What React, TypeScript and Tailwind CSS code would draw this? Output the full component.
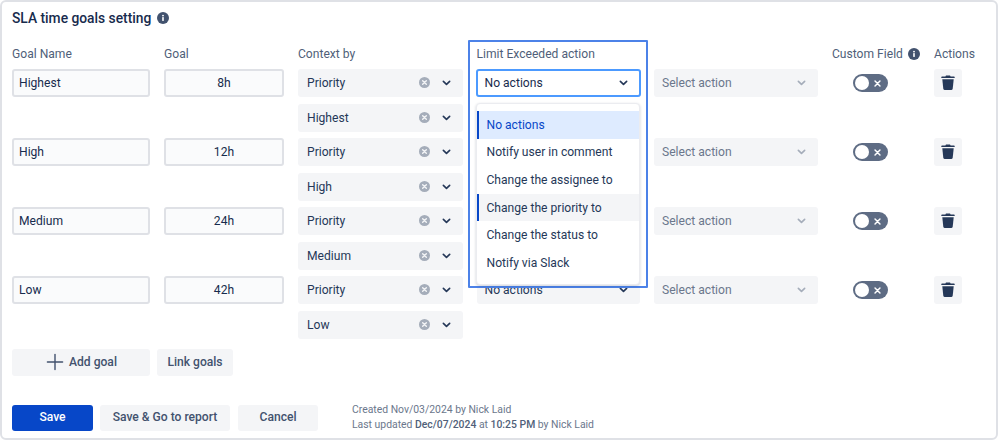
import React from 'react';
import { Plus } from 'lucide-react';

const columns = 'grid grid-cols-[138px_120px_164.5px_163.5px_164px_88px_40px] gap-x-[14px]';

const goals = [
    { name: 'Highest', goal: '8h' },
    { name: 'High', goal: '12h' },
    { name: 'Medium', goal: '24h' },
    { name: 'Low', goal: '42h' }
];

const options = ['No actions', 'Notify user in comment', 'Change the assignee to', 'Change the priority to', 'Change the status to', 'Notify via Slack'];

function InfoIcon() {
    return (
        <svg viewBox="0 0 12 12" className="w-3 h-3 shrink-0">
            <circle cx="6" cy="6" r="6" fill="#42526e" />
            <rect x="5.2" y="5.1" width="1.6" height="3.9" rx="0.4" fill="#fff" />
            <circle cx="6" cy="3.6" r="0.95" fill="#fff" />
        </svg>
    );
}

function Chevron({ color = '#253858' }: { color?: string }) {
    return (
        <svg viewBox="0 0 10 6" className="w-[9px] h-[6px]" fill="none" stroke={color} strokeWidth="1.8" strokeLinecap="round" strokeLinejoin="round">
            <path d="M1.5 1.2 5 4.6l3.5-3.4" />
        </svg>
    );
}

function ClearIcon() {
    return (
        <svg viewBox="0 0 12 12" className="w-[11px] h-[11px]">
            <circle cx="6" cy="6" r="6" fill="#a5adba" />
            <path d="M4 4l4 4M8 4l-4 4" stroke="#f4f5f7" strokeWidth="1.5" strokeLinecap="round" />
        </svg>
    );
}

function TrashIcon() {
    return (
        <svg viewBox="0 0 14 15" className="w-[14px] h-[15px]" fill="#253858">
            <path d="M5 0.4h4l.6 1.1h3.4c.4 0 .7.3.7.7v.8H.3v-.8c0-.4.3-.7.7-.7h3.4z" />
            <path d="M1.3 4.2h11.4l-1 9.6c-.1.7-.6 1.1-1.2 1.1H3.5c-.6 0-1.1-.4-1.2-1.1z" />
        </svg>
    );
}

function Toggle() {
    return (
        <div className="ml-[21px] mt-[5px] w-[35px] h-[18px] rounded-full bg-[#5e6c84] flex items-center justify-between pl-[2px] pr-[7px]">
            <span className="w-[14px] h-[14px] rounded-full bg-white" />
            <svg viewBox="0 0 8 8" className="w-[7px] h-[7px]" stroke="#fff" strokeWidth="1.7" strokeLinecap="round">
                <path d="M1.2 1.2l5.6 5.6M6.8 1.2 1.2 6.8" />
            </svg>
        </div>
    );
}

function ContextSelect({ label }: { label: string }) {
    return (
        <div className="h-[27.5px] rounded-[3px] bg-[#f4f5f7] flex items-center pl-[9px] pr-[12px] text-[#253858]">
            <span className="flex-1">{label}</span>
            <ClearIcon />
            <span className="ml-[12px] flex"><Chevron /></span>
        </div>
    );
}

function ActionSelect({ label, muted }: { label: string; muted?: boolean }) {
    return (
        <div className={`h-[27.5px] rounded-[3px] bg-[#f4f5f7] flex items-center justify-between pl-[8px] pr-[12px] ${muted ? 'text-[#6b778c]' : 'text-[#253858]'}`}>
            <span>{label}</span>
            <Chevron color={muted ? '#a5adba' : '#253858'} />
        </div>
    );
}

function GoalRow({ name, goal, covered }: { name: string; goal: string; covered: boolean }) {
    return (
        <div className={columns}>
            <div className="h-[27.5px] rounded-[3px] border-2 border-[#dfe1e6] bg-[#fafbfc] flex items-center pl-[5px] text-[#172b4d]">{name}</div>
            <div className="h-[27.5px] rounded-[3px] border-2 border-[#dfe1e6] bg-[#fafbfc] flex items-center justify-center text-[#172b4d]">{goal}</div>
            <div className="flex flex-col gap-[7.5px]">
                <ContextSelect label="Priority" />
                <ContextSelect label={name} />
            </div>
            {/* the open menu hides this cell in the upper rows */}
            {covered ? <span /> : <ActionSelect label="No actions" />}
            <ActionSelect label="Select action" muted />
            <Toggle />
            <div className="w-[28px] h-[27.5px] rounded-[3px] bg-[#f4f5f7] flex items-center justify-center">
                <TrashIcon />
            </div>
        </div>
    );
}

export default function App() {
    return (
        <div className="w-[999px] h-[441px] bg-white text-[12.1px] font-['Roboto',sans-serif]">
            <div className="relative h-[440px] w-[998px] rounded-md border-2 border-[#dfe1e6] pl-[10px] pt-[8px]">
                <div className="flex items-center gap-[6px] h-[16px]">
                    <h1 className="text-[13.8px] font-medium text-[#172b4d]">SLA time goals setting</h1>
                    <InfoIcon />
                </div>

                <div className={`${columns} mt-[19px] h-[16px] items-center whitespace-nowrap text-[#505f79]`}>
                    <span>Goal Name</span>
                    <span>Goal</span>
                    <span>Context by</span>
                    <span />
                    <span />
                    <span className="flex items-center gap-[5px]">Custom Field <InfoIcon /></span>
                    <span>Actions</span>
                </div>

                <div className="mt-[8px] flex flex-col gap-[6.5px]">
                    {goals.map((g, i) => <GoalRow key={g.name} name={g.name} goal={g.goal} covered={i < 3} />)}
                </div>

                <div className="mt-[10px] flex gap-[7px] font-medium text-[#42526e]">
                    <button className="w-[138px] h-[27.5px] rounded-[3px] bg-[#f4f5f7] flex items-center justify-center gap-[1px] pr-[3px]">
                        <Plus size={26} strokeWidth={1.3} /> Add goal
                    </button>
                    <button className="w-[76px] h-[27.5px] rounded-[3px] bg-[#f4f5f7]">Link goals</button>
                </div>

                <div className="mt-[25.5px] flex items-center font-medium">
                    <button className="w-[81px] h-[26px] rounded-[3px] bg-[#0747c8] text-white">Save</button>
                    <button className="ml-[7px] w-[130px] h-[26px] rounded-[3px] bg-[#f4f5f7] text-[#42526e]">Save &amp; Go to report</button>
                    <button className="ml-[8px] w-[80px] h-[26px] rounded-[3px] bg-[#f4f5f7] text-[#42526e]">Cancel</button>
                    <div className="ml-[34px] mb-[2px] text-[10.4px] leading-[15px] font-normal text-[#6b778c]">
                        <div>Created Nov/03/2024 by Nick Laid</div>
                        <div>Last updated <b className="font-medium text-[#505f79]">Dec/07/2024</b> at <b className="font-medium text-[#505f79]">10:25 PM</b> by Nick Laid</div>
                    </div>
                </div>

                {/* Highlight frame round the action column */}
                <div className="absolute left-[466px] top-[38px] w-[180px] h-[248px] border-2 border-[#4c82e8] bg-white rounded-[1px] px-[5.5px] pt-[2px]">
                    <div className="h-[16px] flex items-center pl-[1px] mt-[2px] text-[#505f79]">Limit Exceeded action</div>
                    <div className="mt-[7px] h-[27.5px] rounded-[3px] border-2 border-[#4c9aff] bg-white flex items-center justify-between pl-[7px] pr-[11px] text-[#172b4d]">
                        <span>No actions</span>
                        <Chevron />
                    </div>
                    <div className="mt-[6.5px] w-[164px] h-[182px] rounded-[4px] bg-white border border-[#ebecf0] shadow-[0_1px_3px_rgba(9,30,66,0.2)] pt-[7px] text-[#253858]">
                        {options.map((o, i) => (
                            <div
                                key={o}
                                className={`h-[27.6px] flex items-center pl-[8px] border-l-2 ${i === 0 ? 'bg-[#deebff] border-[#0747c8] text-[#0747c8]' : i === 3 ? 'bg-[#f4f5f7] border-[#0747c8]' : 'border-transparent'}`}
                            >
                                {o}
                            </div>
                        ))}
                    </div>
                </div>
            </div>
        </div>
    );
}
